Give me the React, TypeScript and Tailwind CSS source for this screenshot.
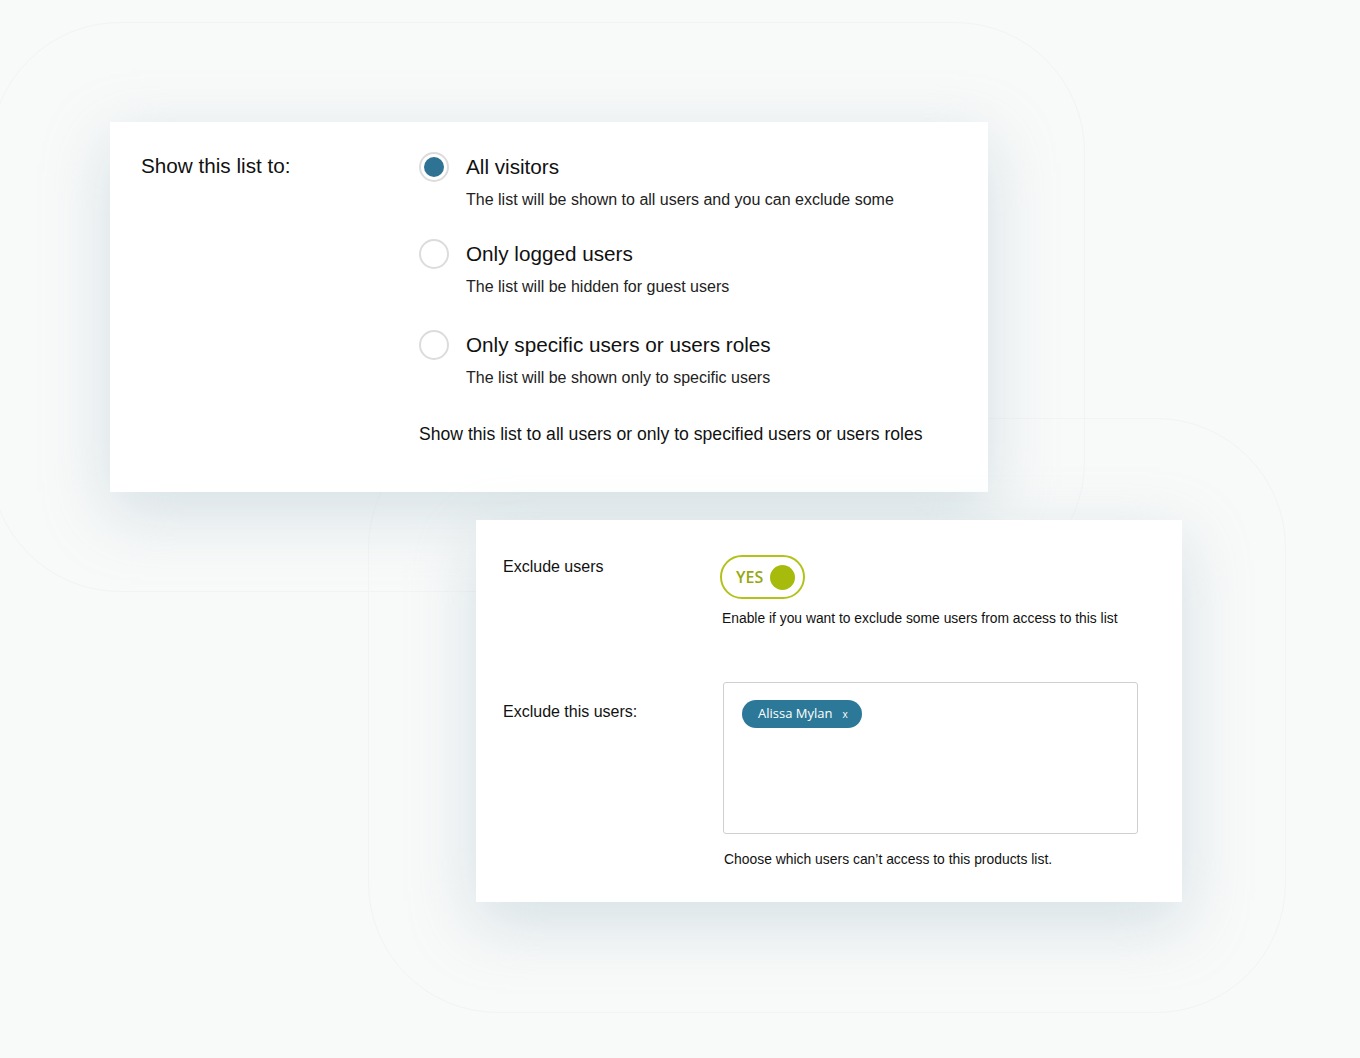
import React from "react"

const sans = "[font-family:Liberation_Sans,Arial,sans-serif]"

function Radio({ checked }: { checked?: boolean }) {
  return (
    <span className="-mt-[2px] flex h-[30px] w-[30px] shrink-0 items-center justify-center rounded-full border-2 border-[#dcdcdc] bg-white">
      {checked && <span className="h-[20px] w-[20px] rounded-full bg-[#2f7394]" />}
    </span>
  )
}

function Option({ title, desc, checked }: { title: string; desc: string; checked?: boolean }) {
  return (
    <div className="flex gap-[17px]">
      <Radio checked={checked} />
      <div>
        <div className="text-[20.7px] leading-[26px] text-[#111]">{title}</div>
        <div className="mt-[10px] text-[16px] leading-[20px] text-[#222]">{desc}</div>
      </div>
    </div>
  )
}

export default function App() {
  return (
    <div className={`relative min-h-[1058px] w-full overflow-hidden bg-[#f8f9f9] ${sans}`}>
      {/* faint background shapes */}
      <div className="pointer-events-none absolute left-[-10px] top-[22px] h-[570px] w-[1095px] rounded-[130px] border border-[#f2f4f4]" />
      <div className="pointer-events-none absolute left-[368px] top-[418px] h-[595px] w-[918px] rounded-[130px] border border-[#f2f4f4]" />

      {/* Panel 1 */}
      <div className="relative ml-[110px] mt-[122px] flex h-[370px] w-[878px] bg-white pl-[31px] pt-[32px] shadow-[0_20px_60px_rgba(170,195,205,0.45)]">
        <div className="-mt-[1px] w-[278px] text-[20.7px] leading-[26px] text-[#111]">Show this list to:</div>
        <div className="flex flex-col">
          <Option checked title="All visitors" desc="The list will be shown to all users and you can exclude some" />
          <div className="mt-[31px]">
            <Option title="Only logged users" desc="The list will be hidden for guest users" />
          </div>
          <div className="mt-[35px]">
            <Option title="Only specific users or users roles" desc="The list will be shown only to specific users" />
          </div>
          <div className="mt-[34px] text-[17.6px] leading-[24px] text-[#111]">
            Show this list to all users or only to specified users or users roles
          </div>
        </div>
      </div>

      {/* Panel 2 */}
      <div className="relative ml-[476px] mt-[28px] flex h-[382px] w-[706px] bg-white pl-[27px] pt-[35px] shadow-[0_20px_60px_rgba(170,195,205,0.45)]">
        <div className="w-[217px] text-[16px] leading-[24px] text-[#111]">
          <div>Exclude users</div>
          <div className="mt-[121px]">Exclude this users:</div>
        </div>
        <div className="flex flex-col">
          <div className="flex h-[44px] w-[85px] items-center justify-between rounded-full border-2 border-[#b3c21a] pl-[14px] pr-[8px]">
            <span className="font-['Open_Sans',sans-serif] text-[16px] font-semibold text-[#95a812]">YES</span>
            <span className="h-[25px] w-[25px] rounded-full bg-[#a7bb0c]" />
          </div>
          <div className="ml-[2px] mt-[10px] text-[13.85px] leading-[18px] text-[#111]">
            Enable if you want to exclude some users from access to this list
          </div>
          <div className="ml-[3px] mt-[55px] h-[152px] w-[415px] rounded-[3px] border border-[#cfcfcf] pl-[18px] pt-[17px]">
            <span className="inline-flex h-[28px] items-center gap-[10px] rounded-full bg-[#2c7898] pl-[16px] pr-[14px] font-['Open_Sans',sans-serif] text-[13px] text-white">
              Alissa Mylan
              <span className="text-[10px]">x</span>
            </span>
          </div>
          <div className="ml-[4px] mt-[16px] text-[13.9px] leading-[18px] text-[#111]">
            Choose which users can’t access to this products list.
          </div>
        </div>
      </div>
    </div>
  )
}
